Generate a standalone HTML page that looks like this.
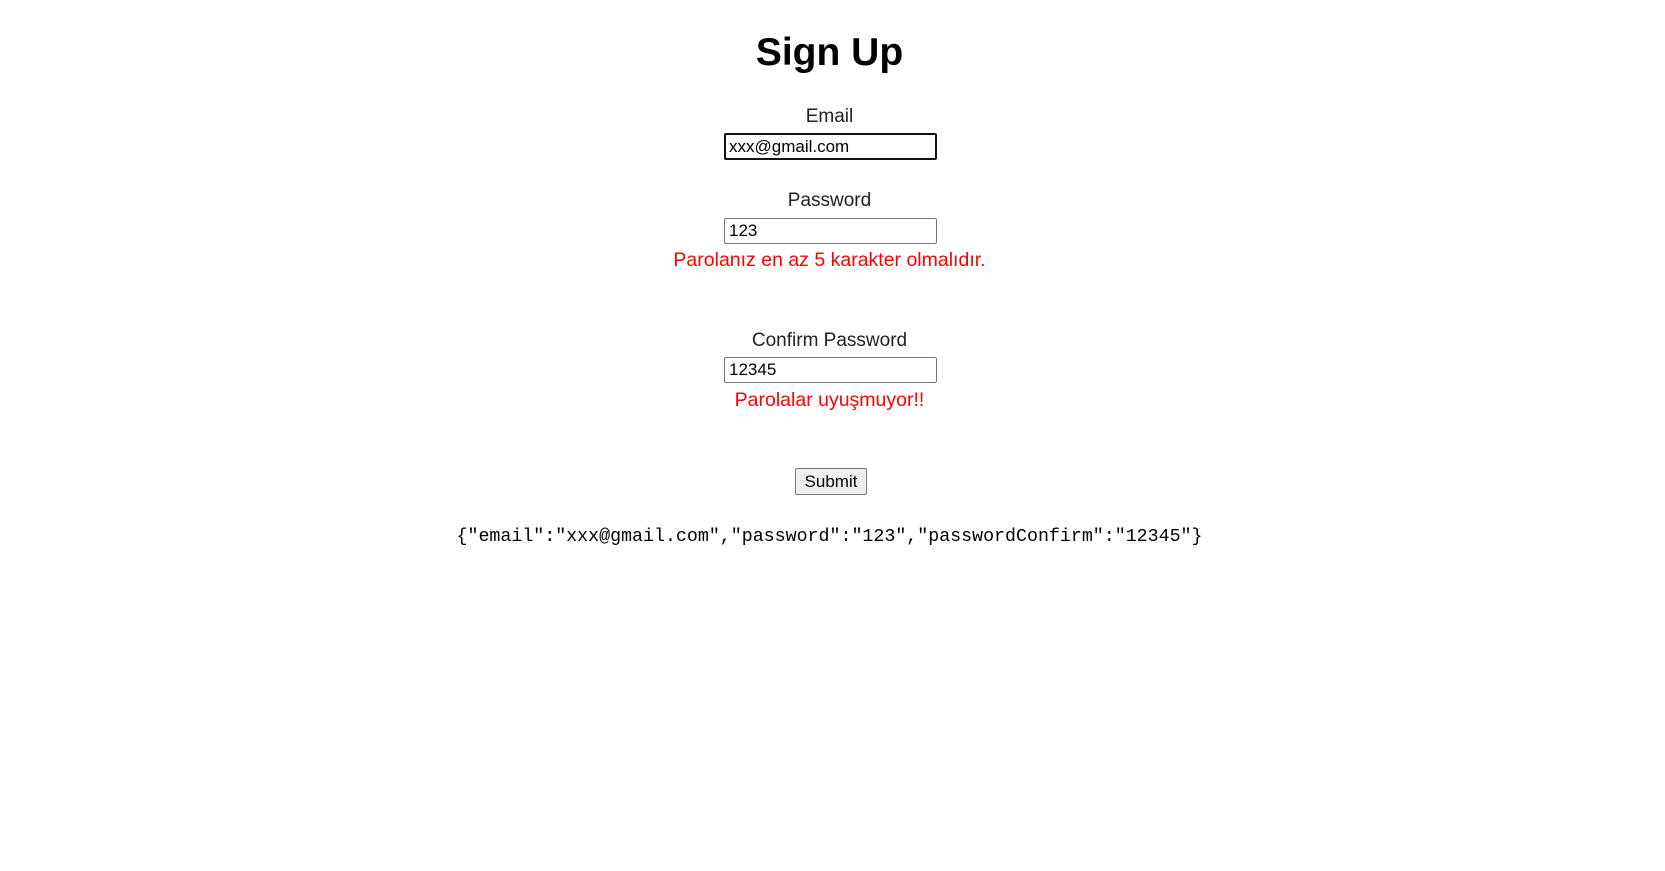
<!DOCTYPE html>
<html><head><meta charset="utf-8"><style>
html,body{margin:0;padding:0;background:#fff;width:1665px;height:871px;overflow:hidden}
body{font-family:"Liberation Sans",sans-serif;position:relative}
.c{position:absolute;left:-3px;width:1665px;text-align:center;white-space:nowrap}
h1{margin:0;font-size:39px;font-weight:bold;color:#000;font-family:"Liberation Sans",sans-serif}
.lbl{font-size:19px;color:#222}
.err{font-size:19.5px;color:#f00}
.inp{position:absolute;left:724px;width:207px;height:24px;border:1px solid #767676;border-radius:2px;font-size:17px;line-height:24px;padding-left:4px}
.btn{position:absolute;left:795px;top:468px;width:70px;height:25px;border:1px solid #767676;border-radius:2px;background:#efefef;font-size:17px;line-height:25px;text-align:center}
.json{position:absolute;left:-3px;width:1665px;text-align:center;top:527px;font-family:"Liberation Mono",monospace;font-size:18.3px;white-space:nowrap;color:#000}
</style></head><body>
<div class="c" style="top:31px"><h1>Sign Up</h1></div>
<div class="c lbl" style="top:106px">Email</div>
<div class="inp" style="top:133px;border:2px solid #111;height:23px;line-height:23px;width:206px;padding-left:3px">xxx@gmail.com</div>
<div class="c lbl" style="top:190px">Password</div>
<div class="inp" style="top:218px">123</div>
<div class="c err" style="top:249px">Parolanız en az 5 karakter olmalıdır.</div>
<div class="c lbl" style="top:330px">Confirm Password</div>
<div class="inp" style="top:357px">12345</div>
<div class="c err" style="top:389px">Parolalar uyuşmuyor!!</div>
<div class="btn">Submit</div>
<div class="json">{"email":"xxx@gmail.com","password":"123","passwordConfirm":"12345"}</div>
</body></html>
